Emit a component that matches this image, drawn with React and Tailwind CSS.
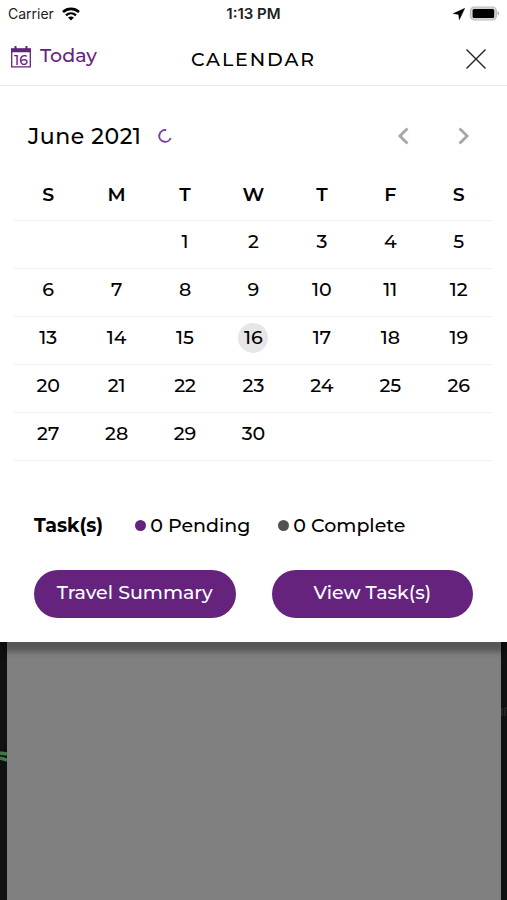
import React from "react";

const weekdays = ["S", "M", "T", "W", "T", "F", "S"];
const weekdayNames = [
  "Sunday",
  "Monday",
  "Tuesday",
  "Wednesday",
  "Thursday",
  "Friday",
  "Saturday",
];

// June 2021 starts on a Tuesday
const FIRST_WEEKDAY = 2;
const DAYS_IN_MONTH = 30;
const TODAY = 16;

const weeks = Array.from({ length: 5 }, (_, week) =>
  Array.from({ length: 7 }, (_, day) => {
    const date = week * 7 + day - FIRST_WEEKDAY + 1;
    return date > 0 && date <= DAYS_IN_MONTH ? date : null;
  })
);

const StatusBar = () => (
  <div className="grid grid-cols-3 items-center h-7 px-2 font-['Inter','Liberation_Sans',sans-serif] text-[#222222]">
    <div className="flex items-center gap-2 text-sm">
      <span>Carrier</span>
      {/* Wifi */}
      <svg className="w-[18px] h-[14px]" viewBox="0 0 18 14" fill="none" stroke="#000" aria-hidden="true">
        <path d="M1 5C5.6.8 12.4.8 17 5" strokeWidth="2.6" />
        <path d="M4 8.3c2.9-2.6 7.1-2.6 10 0" strokeWidth="2.4" />
        <path d="M9 13.6 6 10.6c1.6-1.4 4.4-1.4 6 0Z" fill="#000" stroke="none" />
      </svg>
    </div>
    <span className="text-center text-[15px] font-semibold">1:13 PM</span>
    <div className="flex items-center justify-end gap-1">
      {/* Location arrow */}
      <svg className="w-3 h-3" viewBox="0 0 12 12" aria-hidden="true">
        <path d="M11.8.2.2 5.6l5.4.9.7 5.3Z" fill="#000" stroke="#000" strokeWidth=".4" />
      </svg>
      {/* Battery */}
      <svg className="w-[30px] h-4" viewBox="0 0 30 16" aria-hidden="true">
        <rect x="1.4" y="1" width="26" height="13" rx="4" fill="#d4d4d4" stroke="#bdbdbd" strokeWidth="1.2" />
        <rect x="3.6" y="3" width="21.6" height="9" rx="1.6" fill="#000" />
        <path d="M28.6 5.3c2 .9 2 3.1 0 4Z" fill="#a8a8a8" />
      </svg>
    </div>
  </div>
);

const Header = () => (
  <header className="grid grid-cols-3 items-center h-[58px] px-2.5 border-b border-[#ededed]">
    <button type="button" className="flex items-center gap-2 text-[19px] font-medium text-[#65237e]">
      <svg className="w-[22px] h-[22px]" viewBox="0 0 22 22" aria-hidden="true">
        <path d="M1.7 3.5h18.6v17.3H1.7Z" fill="none" stroke="#65237e" strokeWidth="1.3" />
        <path d="M1 2.2h20v4H1ZM4.5 0h2v3h-2ZM15.5 0h2v3h-2Z" fill="#65237e" />
        <text x="11" y="18.6" textAnchor="middle" fontSize="14" fontWeight="500" fill="#65237e">
          16
        </text>
      </svg>
      Today
    </button>
    <h1 className="pt-2 text-center text-[19px] font-medium tracking-widest">CALENDAR</h1>
    <button type="button" aria-label="Close" className="justify-self-end pt-1 pr-2.5">
      <svg className="w-[22px] h-[22px]" viewBox="0 0 22 22" aria-hidden="true">
        <path d="m1.5 1.5 19 19m0-19-19 19" stroke="#222" strokeWidth="1.4" fill="none" />
      </svg>
    </button>
  </header>
);

const MonthBar = () => (
  <div className="flex items-center justify-between h-24 pt-1 pl-7 pr-9">
    <div className="flex items-center gap-4">
      <h2 className="text-[22px] font-medium tracking-wide">June 2021</h2>
      {/* Loading spinner */}
      <svg className="w-3.5 h-3.5" viewBox="0 0 14 14" role="img" aria-label="Loading">
        <path d="M8.2 1.1A5.9 5.9 0 1 0 12.7 9" fill="none" stroke="#7b3f9d" strokeWidth="2" />
      </svg>
    </div>
    <div className="flex items-center gap-11">
      <button type="button" aria-label="Previous month">
        <svg className="w-4 h-[18px]" viewBox="0 0 16 18" fill="none" aria-hidden="true">
          <path d="M12.5 1.5 4.9 9l7.6 7.5" stroke="#a6a6a6" strokeWidth="2.8" />
        </svg>
      </button>
      <button type="button" aria-label="Next month">
        <svg className="w-4 h-[18px]" viewBox="0 0 16 18" fill="none" aria-hidden="true">
          <path d="m4.5 1.5 7.6 7.5-7.6 7.5" stroke="#a6a6a6" strokeWidth="2.8" />
        </svg>
      </button>
    </div>
  </div>
);

const MonthGrid = () => (
  <div className="px-3.5">
    <table className="w-full table-fixed border-collapse text-center text-[19px] leading-6 font-medium">
      <thead>
        <tr className="border-b border-[#f1f1f1]">
          {weekdays.map((day, i) => (
            <th key={weekdayNames[i]} scope="col" abbr={weekdayNames[i]} className="h-[38px] p-0 pb-3 font-semibold">
              {day}
            </th>
          ))}
        </tr>
      </thead>
      <tbody>
        {weeks.map((week, i) => (
          <tr key={i} className="border-b border-[#f1f1f1]">
            {week.map((date, j) => (
              <td key={j} className="h-12 p-0 pb-1">
                {date && (
                  <button
                    type="button"
                    className={
                      date === TODAY
                        ? "w-[30px] h-[30px] rounded-full bg-[#e6e6e6]"
                        : "w-[30px] h-[30px] rounded-full"
                    }
                  >
                    {date}
                  </button>
                )}
              </td>
            ))}
          </tr>
        ))}
      </tbody>
    </table>
  </div>
);

const TaskSummary = () => (
  <section className="px-[34px] pt-[51px] pb-6">
    <div className="flex items-center text-[19px] leading-7 font-medium">
      <h3 className="font-bold">Task(s)</h3>
      <p className="flex items-center gap-1 ml-8">
        <span className="w-[11px] h-[11px] rounded-full bg-[#65237e]" />
        0 Pending
      </p>
      <p className="flex items-center gap-1 ml-7">
        <span className="w-[11px] h-[11px] rounded-full bg-[#515151]" />
        0 Complete
      </p>
    </div>
    <div className="grid grid-cols-2 gap-9 mt-[30px]">
      <button type="button" className="h-12 rounded-full bg-[#65237e] text-[19px] font-medium text-white">
        Travel Summary
      </button>
      <button type="button" className="h-12 rounded-full bg-[#65237e] text-[19px] font-medium text-white">
        View Task(s)
      </button>
    </div>
  </section>
);

const App = () => (
  <div className="flex flex-col min-h-screen bg-[#101010] font-['Montserrat','Inter','Liberation_Sans',sans-serif] text-black">
    <main className="relative z-10 bg-white shadow-[0_11px_6px_-1px_rgba(0,0,0,0.32)]">
      <StatusBar />
      <Header />
      <MonthBar />
      <MonthGrid />
      <TaskSummary />
    </main>

    {/* Dimmed page behind the calendar sheet */}
    <div className="flex grow">
      <div className="w-[7px] pt-[108px]">
        <svg className="w-[7px] h-3" viewBox="0 0 7 12" aria-hidden="true">
          <path d="M0 3l7 1M0 8l7 2" stroke="#3f7a44" strokeWidth="3.6" />
        </svg>
      </div>
      <div className="grow bg-[#808080]" />
      <div className="w-1.5 pt-16">
        <svg className="w-1.5 h-3" viewBox="0 0 6 12" aria-hidden="true">
          <path d="M1 2v8M4 10V2h2" stroke="#333" strokeWidth="1" fill="none" />
        </svg>
      </div>
    </div>
  </div>
);

export default App;
